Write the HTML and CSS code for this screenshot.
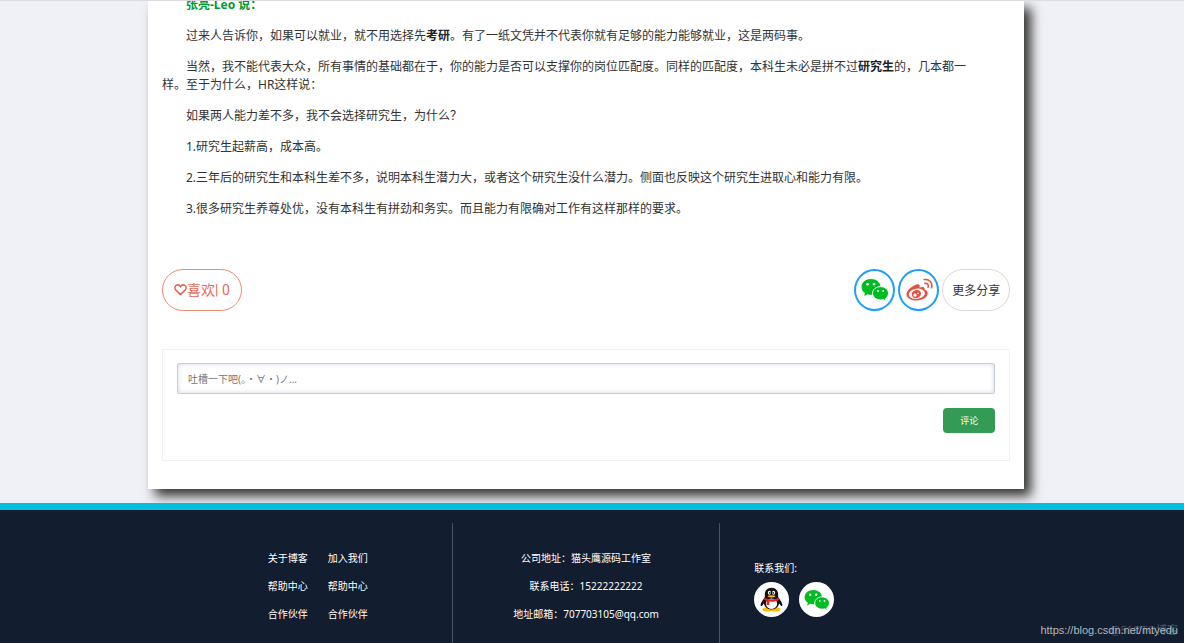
FILE: index.html
```html
<!DOCTYPE html>
<html lang="zh-CN">
<head>
<meta charset="utf-8">
<title>猫头鹰博客</title>
<link rel="stylesheet" href="styles.css">
</head>
<body>
<svg class="sprite" aria-hidden="true">
  <symbol id="wechat" viewBox="0 0 28 24">
    <path fill="#0b2" d="M10 1C4.600 1 .5 4.400 .5 8.900c0 2.600 1.400 4.700 3.500 6.100L3.200 18l3.400-1.800c1.100.4 2.200.5 3.400.5C15.400 16.700 19.500 13.300 19.500 8.900S15.400 1 10 1z"/>
    <path fill="#0b2" stroke="#fff" stroke-width="1" d="M19.600 8.600c-4.500 0-8.100 3-8.100 6.700s3.600 6.700 8.100 6.700c1 0 1.900-.1 2.800-.4l2.900 1.600-.7-2.600c1.800-1.300 2.900-3.200 2.900-5.300 0-3.700-3.500-6.700-7.900-6.700z"/>
    <circle cx="6.600" cy="6.300" r="1.300" fill="#fff"/><circle cx="13" cy="6.300" r="1.300" fill="#fff"/>
    <circle cx="17" cy="13" r="1" fill="#fff"/><circle cx="22.200" cy="13" r="1" fill="#fff"/>
  </symbol>
</svg>
<main class="card">
  <article class="article">
    <h2 class="speaker">张亮-Leo 说：</h2>
    <p>过来人告诉你，如果可以就业，就不用选择先<strong>考研</strong>。有了一纸文凭并不代表你就有足够的能力能够就业，这是两码事。</p>
    <p>当然，我不能代表大众，所有事情的基础都在于，你的能力是否可以支撑你的岗位匹配度。同样的匹配度，本科生未必是拼不过<strong>研究生</strong>的，几本都一样。至于为什么，HR这样说：</p>
    <p>如果两人能力差不多，我不会选择研究生，为什么？</p>
    <p>1.研究生起薪高，成本高。</p>
    <p>2.三年后的研究生和本科生差不多，说明本科生潜力大，或者这个研究生没什么潜力。侧面也反映这个研究生进取心和能力有限。</p>
    <p>3.很多研究生养尊处优，没有本科生有拼劲和务实。而且能力有限确对工作有这样那样的要求。</p>
  </article>
  <div class="actions">
    <button class="like" type="button">
      <svg class="heart" viewBox="0 0 14 14" aria-hidden="true"><path d="M7 12 2 7.100C.2 5.100.8 2.500 2.900 1.700 4.700 1.100 6.200 2 7 3.500 7.800 2 9.300 1.100 11.100 1.700c2.100.8 2.700 3.400.9 5.400z"/></svg><span>喜欢| 0</span>
    </button>
    <div class="share">
      <a class="round" href="#" aria-label="微信"><svg class="wechat" aria-hidden="true"><use href="#wechat"/></svg></a>
      <a class="round" href="#" aria-label="微博"><svg class="weibo" viewBox="0 0 28 24" aria-hidden="true">
        <path fill="#e6503f" d="M19.500 11.600c.7-2.200-.6-3.600-5-2 .9-2.900-.8-4.200-4.400-2.500C5.500 9.300 1.500 13.300 1.500 16.500c0 3.300 4.100 6 10 6 6.400 0 11.200-3.400 11.200-6.900 0-2.100-1.400-3.400-3.200-4z"/>
        <ellipse cx="11.800" cy="15.800" rx="8.200" ry="5.100" fill="#fff" transform="rotate(-8 11.800 15.800)"/>
        <ellipse cx="11.400" cy="16.100" rx="4.700" ry="4" fill="#e6503f" transform="rotate(-20 11.400 16.100)"/>
        <circle cx="10" cy="17.100" r="1.700" fill="#fff"/><circle cx="13" cy="15.400" r=".8" fill="#fff"/>
        <path fill="none" stroke="#e6503f" stroke-width="1.500" stroke-linecap="round" d="M19.200 1.600c5-.9 8.900 3.500 7.300 8.200M19.800 5.400c2.400-.5 4.100 1.500 3.300 3.900"/>
      </svg></a>
      <button class="more" type="button">更多分享</button>
    </div>
  </div>
  <form class="comment">
    <input class="comment-input" type="text" aria-label="评论内容" placeholder="吐槽一下吧(。・∀・)ノ...">
    <button class="comment-submit" type="button">评论</button>
  </form>
</main>
<footer class="footer">
  <div class="columns">
    <nav class="links">
      <a href="#">关于博客</a><a href="#">加入我们</a>
      <a href="#">帮助中心</a><a href="#">帮助中心</a>
      <a href="#">合作伙伴</a><a href="#">合作伙伴</a>
    </nav>
    <address class="address">
      <div>公司地址：猫头鹰源码工作室</div>
      <div>联系电话：15222222222</div>
      <div>地址邮箱：707703105@qq.com</div>
    </address>
    <div class="contact">
      <div>联系我们:</div>
      <div class="contact-icons">
        <a class="badge" href="#" aria-label="QQ"><svg class="qq" viewBox="0 0 24 24" aria-hidden="true">
          <ellipse cx="8" cy="21.500" rx="4.500" ry="2" fill="#fb0"/><ellipse cx="16" cy="21.500" rx="4.500" ry="2" fill="#fb0"/>
          <path fill="#111" d="M12 .8C8.200.8 5.600 3.500 5.600 7.100v2.400C4.100 12 1.700 14.800 1.500 17.200c0 1.300.8 1.400 1.600.5l1.600-1.900c.7 3.400 3.600 5.700 7.300 5.700s6.600-2.300 7.300-5.700l1.600 1.900c.8.900 1.600.8 1.600-.5-.2-2.400-2.600-5.200-4.100-7.700V7.100C18.400 3.500 15.800.8 12 .8z"/>
          <ellipse cx="12" cy="16" rx="5.400" ry="5" fill="#fff"/>
          <ellipse cx="10" cy="5.500" rx="1.500" ry="2" fill="#fff"/><ellipse cx="14" cy="5.500" rx="1.500" ry="2" fill="#fff"/>
          <circle cx="10.400" cy="5.700" r=".8" fill="#111"/><circle cx="13.600" cy="5.700" r=".8" fill="#111"/>
          <ellipse cx="12" cy="8.900" rx="3.700" ry="1.100" fill="#fb0"/>
          <path fill="#e22" d="M5.300 10.200c4 2.200 9.400 2.200 13.400 0l.6 2.200c-2.800 1.500-6.200 2-9.300 1.600l-.2 3.300H7.200l.3-4-2.800-1z"/>
        </svg></a>
        <a class="badge" href="#" aria-label="微信"><svg class="wechat" aria-hidden="true"><use href="#wechat"/></svg></a>
      </div>
    </div>
  </div>
</footer>
<div class="mark mark-faint">@51CTO博客</div>
<div class="mark">https://blog.csdn.net/mtyedu</div>
</body>
</html>
```
FILE: styles.css
```css
* { box-sizing: border-box; }

body {
  margin: 0;
  min-height: 100vh;
  display: flex;
  flex-direction: column;
  position: relative;
  overflow: hidden;
  background: #f0f1f6;
  border-top: 1px solid #dcdce0;
  color: #333;
  font: 12px/18px "Noto Sans", "Noto Sans CJK SC", sans-serif;
}

a { color: inherit; text-decoration: none; }
button, input { font-family: inherit; }
.sprite { display: none; }

.card {
  width: 74%;
  margin-left: 12.5%;
  padding: 0 14px 28px;
  background: #fff;
  box-shadow: 7px 7px 11px #333;
}

.article { margin-top: -5px; padding-right: 36px; }
.article p { margin: 13px 0 0; text-indent: 2em; }
.article strong { color: #222; }
.speaker {
  margin: 0;
  font-size: 12px;
  line-height: 18px;
  text-indent: 2em;
  color: #093;
}

.actions {
  display: flex;
  justify-content: space-between;
  margin-top: 51px;
}

.like {
  display: flex;
  align-items: center;
  justify-content: center;
  width: 80px;
  height: 42px;
  padding: 0;
  border: 1px solid #ec8a78;
  border-radius: 21px;
  background: #fff;
  color: #e66a58;
  font: 14px/18px Roboto, "Noto Sans CJK SC", sans-serif;
}
.heart { width: 13px; height: 14px; fill: none; stroke: #e0604e; stroke-width: 1.6; }

.share { display: flex; gap: 3px; }
.round {
  display: flex;
  align-items: center;
  justify-content: center;
  width: 41px;
  height: 42px;
  border: 2px solid #1c9ffa;
  border-radius: 50%;
}
.wechat, .weibo { width: 28px; height: 24px; }
.more {
  width: 68px;
  height: 42px;
  padding: 0;
  border: 1px solid #d8d8d8;
  border-radius: 21px;
  background: #fff;
  color: #333;
  font-size: 12px;
}

.comment {
  display: flex;
  flex-direction: column;
  gap: 14px;
  margin-top: 38px;
  padding: 13px 14px 27px;
  border: 1px solid #f1f1f1;
}
.comment-input {
  height: 31px;
  padding: 0 10px;
  border: 1px solid #c8cbd8;
  border-radius: 2px;
  background: #fff;
  box-shadow: inset 0 0 5px #d4d8e4;
  font-size: 10px;
}
.comment-input::placeholder { color: #777; }
.comment-submit {
  align-self: flex-end;
  width: 52px;
  height: 25px;
  padding: 0;
  border: 0;
  border-radius: 4px;
  background: #349b54;
  color: #fff;
  font-size: 9px;
}

.footer {
  flex: 1;
  display: flex;
  margin-top: 14px;
  padding-top: 13px;
  border-top: 7px solid #00c0df;
  background: #121d2f;
  color: #fff;
  font-size: 10px;
  position: relative;
}
.columns {
  width: 68%;
  margin-left: 15.5%;
  display: grid;
  grid-template-columns: repeat(3, 1fr);
}
.columns > * { padding-top: 21px; line-height: 28px; }
.links {
  display: grid;
  grid-template-columns: auto auto;
  justify-content: center;
  align-content: start;
  column-gap: 20px;
}
.address {
  border: solid #4b5360;
  border-width: 0 1px;
  font-style: normal;
  text-align: center;
}
.columns > .contact { padding: 38px 0 0 34px; line-height: 14px; }
.contact-icons { display: flex; gap: 10px; margin-top: 7px; }
.badge {
  display: flex;
  align-items: center;
  justify-content: center;
  width: 35px;
  height: 35px;
  border-radius: 50%;
  background: #fff;
}
.badge .wechat { width: 26px; height: 22px; }
.qq { width: 25px; height: 25px; }

.mark {
  position: absolute;
  right: 6px;
  bottom: 4px;
  color: #b4b8be;
  font: 11px/18px "Liberation Sans", "Noto Sans CJK SC", sans-serif;
}
.mark-faint { color: #47505f; }
```
